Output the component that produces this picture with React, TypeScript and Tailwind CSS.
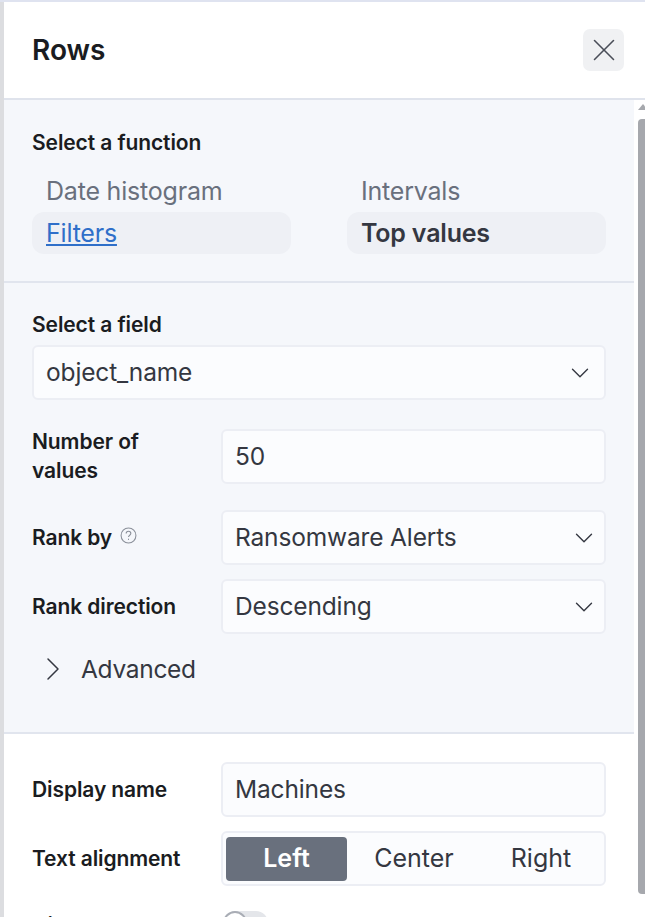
import { ChevronDown, ChevronRight, X } from 'lucide-react';

const labelClass = 'text-[21px] leading-[29px] font-semibold text-[#1a1c21] tracking-[-0.1px]';
const boxClass =
  'h-[55px] flex items-center justify-between rounded-[6px] border-2 border-[#eceef4] bg-[#fbfcfe] text-[24.5px] text-[#343741] tracking-[-0.15px]';

function SelectBox({ value, className = '', iconClass = 'mr-[5px]' }: { value: string; className?: string; iconClass?: string }) {
  return (
    <div className={`${boxClass} pl-[12px] ${className}`}>
      <span>{value}</span>
      <ChevronDown size={30} strokeWidth={1.1} className={`text-[#343741] ${iconClass}`} />
    </div>
  );
}

function Row({ label, className = '', children }: { label: React.ReactNode; className?: string; children: React.ReactNode }) {
  return (
    <div className={`flex items-center ${className}`}>
      <div className={`w-[189px] shrink-0 ${labelClass}`}>{label}</div>
      <div className="w-[385px]">{children}</div>
    </div>
  );
}

export default function App() {
  return (
    <div className="h-[917px] w-[645px] overflow-hidden flex bg-white font-['Inter',sans-serif] border-t-2 border-[#dfe3f0]">
      <div className="w-[4px] shrink-0 bg-[#dcdde0]" />
      <div className="flex-1 min-w-0 flex flex-col">
        {/* Flyout header */}
        <div className="h-[98px] shrink-0 flex items-center justify-between pl-[28px] pr-[21px] border-b-2 border-[#dfe3ec]">
          <h2 className="text-[28px] font-semibold text-[#1a1c21]">Rows</h2>
          <button className="w-[41px] h-[42px] flex items-center justify-center rounded-[7px] bg-[#f0f1f3] text-[#4a4e58]">
            <X size={38} strokeWidth={1} />
          </button>
        </div>

        <div className="flex-1 min-h-0 flex">
          <div className="w-[630px] shrink-0">
            {/* Function picker */}
            <section className="h-[183px] bg-[#f5f7fb] border-b-2 border-[#e1e5ee] pl-[28px] pt-[28px]">
              <div className={labelClass}>Select a function</div>
              <div className="mt-[13px] grid grid-cols-[259px_259px] gap-x-[56px] text-[25px] leading-[42px] tracking-[-0.2px]">
                <div className="pl-[14px] text-[#69707d]">Date histogram</div>
                <div className="pl-[14px] text-[#69707d]">Intervals</div>
                <div className="rounded-[12px] bg-[#eef0f5] pl-[14px] text-[#2f6fc9] underline">Filters</div>
                <div className="rounded-[12px] bg-[#eef0f5] pl-[14px] font-semibold text-[#343741]">Top values</div>
              </div>
            </section>

            {/* Field settings */}
            <section className="h-[451px] bg-[#f5f7fb] border-b-2 border-[#e1e5ee] pl-[28px] pt-[27px]">
              <div className={labelClass}>Select a field</div>
              <SelectBox value="object_name" className="mt-[6px] w-[574px]" iconClass="mr-[9px]" />
              <Row label={<>Number of<br />values</>} className="mt-[27px]">
                <div className={`${boxClass} pl-[12px]`}>50</div>
              </Row>
              <Row
                label={
                  <span className="flex items-center gap-[8px]">
                    Rank by
                    <svg width="17" height="17" viewBox="0 0 16 16" fill="none" stroke="#8a8f99" strokeWidth="1" className="-mt-[5px]">
                      <circle cx="8" cy="8" r="7" />
                      <path d="M5.8 6.2C5.8 4.9 6.8 4 8 4s2.2.9 2.2 2.1c0 1.6-2.2 1.7-2.2 3.4" />
                      <path d="M8 11v1.2" />
                    </svg>
                  </span>
                }
                className="mt-[25px]"
              >
                <SelectBox value="Ransomware Alerts" />
              </Row>
              <Row label="Rank direction" className="mt-[14px]">
                <SelectBox value="Descending" />
              </Row>
              <div className="mt-[20px] flex items-center pl-[1px] text-[24.5px] leading-[30px] tracking-[-0.3px] text-[#343741]">
                <ChevronRight size={40} strokeWidth={0.9} className="-my-[5px] mr-[8px]" />
                Advanced
              </div>
            </section>

            {/* Appearance */}
            <section className="pl-[28px] pt-[28px] bg-white">
              <Row label="Display name">
                <div className={`${boxClass} pl-[12px]`}>Machines</div>
              </Row>
              <Row label="Text alignment" className="mt-[14px]">
                <div className="h-[55px] flex items-center rounded-[6px] border-2 border-[#eceef4] bg-[#fbfcfe] px-[3px] text-[25px] text-[#343741]">
                  <div className="w-[121px] h-[44px] flex items-center justify-center rounded-[4px] bg-[#69707d] text-white font-semibold">Left</div>
                  <div className="w-[134px] text-center">Center</div>
                  <div className="w-[120px] text-center">Right</div>
                </div>
              </Row>
              <Row label={<span className="block pt-[6px]">Hide column</span>} className="mt-[19px]">
                <div className="w-[45px] h-[24px] ml-[2px] rounded-full bg-[#e4e6ea] relative">
                  <div className="absolute left-0 top-0 w-[24px] h-[24px] rounded-full bg-white border-2 border-[#a9adb5]" />
                </div>
              </Row>
            </section>
          </div>

          {/* Scrollbar */}
          <div className="flex-1 bg-white pt-[4px] flex flex-col items-end">
            <div className="w-0 h-0 mr-[-3px] border-x-[5px] border-x-transparent border-b-[6px] border-b-[#a6a8ad]" />
            <div className="mt-[9px] w-[7px] h-[775px] rounded-l-[4px] bg-[#a6a8ad]" />
          </div>
        </div>
      </div>
    </div>
  );
}
